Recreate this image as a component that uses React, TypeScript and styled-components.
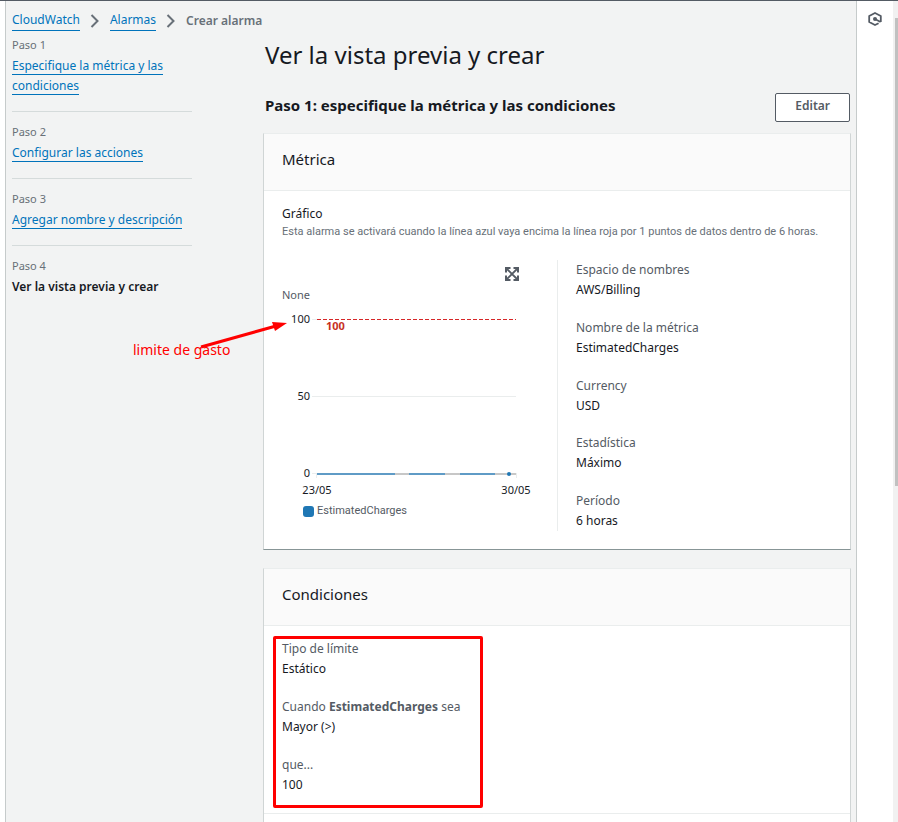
import React from "react";
import styled, { createGlobalStyle } from "styled-components";

const GlobalStyle = createGlobalStyle`
  *, *::before, *::after { box-sizing: border-box; }
  body {
    margin: 0;
    overflow: hidden;
    background: #fff;
    color: #16191f;
    font-family: "Noto Sans", "Open Sans", sans-serif;
    font-size: 12px;
    line-height: 20px;
  }
  h1, h2, h3, p, dl, dd, ol, figure { margin: 0; padding: 0; }
`;

const Shell = styled.div`
  display: flex;
  height: 100vh;
  padding-left: 5px;
  border-top: 1px solid #545b64;
  overflow: hidden;
`;

const Page = styled.div`
  flex: 1;
  min-width: 0;
  display: flex;
  flex-direction: column;
  padding: 9px 5px 0 6px;
  background: #f2f3f3;
  border-left: 1px solid #c6cbcb;
`;

const Breadcrumbs = styled.nav`
  display: flex;
  align-items: center;
  gap: 10px;
  color: #687078;
`;

const Link = styled.a`
  color: #0073bb;
  text-decoration: none;
  border-bottom: 1px solid #0073bb;
`;

const Current = styled.span`
  font-weight: 600;
`;

const Columns = styled.div`
  flex: 1;
  display: flex;
  gap: 71px;
  padding-top: 6px;
`;

const Steps = styled.ol`
  flex: 0 0 180px;
  list-style: none;
`;

const Step = styled.li`
  padding: 12px 0 15px;
  border-bottom: 1px solid #d5dbdb;
  &:first-child { padding-top: 0; }
  &:last-child { border-bottom: 0; }
`;

const StepLabel = styled.div`
  margin-bottom: 3px;
  font-size: 11px;
  line-height: 16px;
  color: #687078;
`;

const StepCurrent = styled.strong`
  font-weight: 600;
`;

const Main = styled.main`
  flex: 1;
  min-width: 0;
  display: flex;
  flex-direction: column;
`;

const Title = styled.h1`
  padding-left: 2px;
  font-size: 24px;
  font-weight: 400;
  line-height: 36px;
`;

const StepHeader = styled.div`
  display: flex;
  justify-content: space-between;
  align-items: flex-start;
  margin: 20px 1px 11px 2px;
`;

const StepTitle = styled.h2`
  font-size: 15px;
  font-weight: 700;
  line-height: 24px;
`;

const EditButton = styled.button`
  padding: 2px 19px 5px;
  border: 1px solid #545b64;
  border-radius: 2px;
  background: #fff;
  color: #545b64;
  font: inherit;
  font-weight: 600;
`;

const Card = styled.section<{ $grow?: boolean }>`
  flex: ${(p) => (p.$grow ? "1 0 auto" : "0 0 auto")};
  margin-bottom: ${(p) => (p.$grow ? 0 : 18)}px;
  background: #fff;
  border: 1px solid #d0d5d5;
  border-top-color: #eaeded;
  border-bottom: ${(p) => (p.$grow ? "0" : "1px solid #879596")};
`;

const CardHeader = styled.header`
  padding: 13px 18px 19px;
  background: #fafafa;
  border-bottom: 1px solid #eaeded;
`;

const CardTitle = styled.h3`
  font-size: 15px;
  font-weight: 400;
  line-height: 24px;
`;

const MetricBody = styled.div`
  padding: 13px 18px 18px;
`;

const Description = styled.p`
  margin-bottom: 20px;
  font-family: Roboto, "Noto Sans", sans-serif;
  font-size: 11px;
  line-height: 16px;
  color: #687078;
`;

const MetricGrid = styled.div`
  display: grid;
  grid-template-columns: 1fr 1fr;
  min-height: 271px;
`;

const Figure = styled.figure`
  position: relative;
  display: flex;
  flex-direction: column;
`;

const ExpandButton = styled.button`
  align-self: flex-end;
  display: flex;
  margin: 7px 38px 4px 0;
  padding: 0;
  border: 0;
  background: none;
  color: #545b64;
`;

const Chart = styled.svg`
  display: block;
  width: 264px;
  height: 216px;
  font-size: 11px;
`;

const Legend = styled.figcaption`
  display: flex;
  align-items: center;
  gap: 3px;
  padding-left: 21px;
  font-family: Roboto, "Noto Sans", sans-serif;
  font-size: 11px;
  color: #545b64;
`;

const Swatch = styled.span`
  width: 11px;
  height: 11px;
  border-radius: 3px;
  background: #1f77b4;
`;

const Annotation = styled.svg`
  position: absolute;
  left: -152px;
  top: 56px;
  width: 160px;
  height: 46px;
  pointer-events: none;
`;

const Properties = styled.dl`
  display: flex;
  flex-direction: column;
  justify-content: space-between;
  padding-left: 18px;
  border-left: 1px solid #eaeded;
`;

const Term = styled.dt`
  color: #545b64;
`;

const Conditions = styled.dl`
  position: relative;
  display: flex;
  flex-direction: column;
  gap: 18px;
  padding: 13px 18px 18px;
  border-bottom: 1px solid #eaeded;
`;

const Highlight = styled.span`
  position: absolute;
  left: 9px;
  top: 10px;
  width: 210px;
  height: 172px;
  border: 3px solid #ff0000;
  border-radius: 2px;
  pointer-events: none;
`;

const Rail = styled.aside`
  flex: 0 0 37px;
  padding: 11px 0 0 11px;
  border-left: 1px solid #c6cbcb;
`;

const RailButton = styled.button`
  display: flex;
  padding: 0;
  border: 0;
  background: none;
  color: #545b64;
`;

const ScrollTrack = styled.div`
  flex: 0 0 5px;
  padding: 17px 0 0 2px;
  background: #f1f1f1;
`;

const ScrollThumb = styled.div`
  height: 468px;
  background: #c1c1c1;
`;

const Chevron = () => (
  <svg width="10" height="14" viewBox="0 0 10 14" fill="none" stroke="currentColor" strokeWidth="2" aria-hidden="true">
    <path d="M1.500 1l6 6-6 6" />
  </svg>
);

const ExpandIcon = () => (
  <svg width="14" height="14" viewBox="0 0 14 14" fill="none" stroke="currentColor" aria-hidden="true">
    <path d="M1 5.500V1h4.500M8.500 1H13v4.500M13 8.500V13H8.500M5.500 13H1V8.500" strokeWidth="2" />
    <path d="M2 2l10 10M12 2L2 12" strokeWidth="1.800" />
  </svg>
);

const HexIcon = () => (
  <svg width="14" height="14" viewBox="0 0 14 14" fill="none" stroke="currentColor" aria-hidden="true">
    <path d="M12.800 10V4L7 1 1.200 4v6L7 13l3.600-1.800" strokeWidth="1.800" strokeLinejoin="round" />
    <path d="M7 7l5.600 3" strokeWidth="1.800" />
    <circle cx="7" cy="7" r="2" fill="currentColor" stroke="none" />
  </svg>
);

const steps = [
  "Especifique la métrica y las condiciones",
  "Configurar las acciones",
  "Agregar nombre y descripción",
];

const properties = [
  ["Espacio de nombres", "AWS/Billing"],
  ["Nombre de la métrica", "EstimatedCharges"],
  ["Currency", "USD"],
  ["Estadística", "Máximo"],
  ["Período", "6 horas"],
];

const MetricChart = () => (
  <Chart viewBox="0 0 264 216" role="img" aria-label="EstimatedCharges" fill="#16191f">
    <text x="0" y="14" fill="#545b64">None</text>
    <g textAnchor="end">
      <text x="28" y="38">100</text>
      <text x="28" y="115">50</text>
      <text x="28" y="192">0</text>
    </g>
    <g textAnchor="middle">
      <text x="35" y="209">23/05</text>
      <text x="234" y="209">30/05</text>
    </g>
    <path d="M30 34.500h5M30 111.500h204M30 188.500h5M34.500 188v5M234.500 188v5" stroke="#eaeded" />
    <path d="M35 34.500h199" stroke="#d62728" strokeDasharray="4 2" />
    <text x="44" y="45" fill="#c7311f" fontWeight="700">100</text>
    <path d="M35 189h199" stroke="#c7c7c7" strokeWidth="2" />
    <path d="M35 189h78M127 189h36M178 189h35" stroke="#5f9bc6" strokeWidth="2" />
    <circle cx="227" cy="189" r="2" fill="#1f77b4" />
  </Chart>
);

export default function App() {
  return (
    <>
      <GlobalStyle />
      <Shell>
        <Page>
          <Breadcrumbs aria-label="Ruta">
            <Link href="#cloudwatch">CloudWatch</Link>
            <Chevron />
            <Link href="#alarmas">Alarmas</Link>
            <Chevron />
            <Current>Crear alarma</Current>
          </Breadcrumbs>
          <Columns>
            <Steps>
              {steps.map((name, i) => (
                <Step key={name}>
                  <StepLabel>Paso {i + 1}</StepLabel>
                  <Link href={`#paso-${i + 1}`}>{name}</Link>
                </Step>
              ))}
              <Step>
                <StepLabel>Paso 4</StepLabel>
                <StepCurrent>Ver la vista previa y crear</StepCurrent>
              </Step>
            </Steps>
            <Main>
              <Title>Ver la vista previa y crear</Title>
              <StepHeader>
                <StepTitle>Paso 1: especifique la métrica y las condiciones</StepTitle>
                <EditButton type="button">Editar</EditButton>
              </StepHeader>
              <Card>
                <CardHeader>
                  <CardTitle>Métrica</CardTitle>
                </CardHeader>
                <MetricBody>
                  <p>Gráfico</p>
                  <Description>
                    Esta alarma se activará cuando la línea azul vaya encima la línea roja por 1 puntos de datos dentro de 6 horas.
                  </Description>
                  <MetricGrid>
                    <Figure>
                      <ExpandButton type="button" aria-label="Ampliar">
                        <ExpandIcon />
                      </ExpandButton>
                      <MetricChart />
                      <Legend>
                        <Swatch />
                        EstimatedCharges
                      </Legend>
                      <Annotation viewBox="0 0 160 46" fill="#ff0000">
                        <path d="M71 31L146 10" stroke="#ff0000" strokeWidth="3" />
                        <path d="M157 7l-15-1 3 9z" />
                        <text x="3" y="39" fontSize="14">limite de gasto</text>
                      </Annotation>
                    </Figure>
                    <Properties>
                      {properties.map(([term, value]) => (
                        <div key={term}>
                          <Term>{term}</Term>
                          <dd>{value}</dd>
                        </div>
                      ))}
                    </Properties>
                  </MetricGrid>
                </MetricBody>
              </Card>
              <Card $grow>
                <CardHeader>
                  <CardTitle>Condiciones</CardTitle>
                </CardHeader>
                <Conditions>
                  <div>
                    <Term>Tipo de límite</Term>
                    <dd>Estático</dd>
                  </div>
                  <div>
                    <Term>
                      Cuando <strong>EstimatedCharges</strong> sea
                    </Term>
                    <dd>Mayor (&gt;)</dd>
                  </div>
                  <div>
                    <Term>que...</Term>
                    <dd>100</dd>
                    <Highlight />
                  </div>
                </Conditions>
              </Card>
            </Main>
          </Columns>
        </Page>
        <Rail>
          <RailButton type="button" aria-label="Diagnóstico">
            <HexIcon />
          </RailButton>
        </Rail>
        <ScrollTrack>
          <ScrollThumb />
        </ScrollTrack>
      </Shell>
    </>
  );
}
